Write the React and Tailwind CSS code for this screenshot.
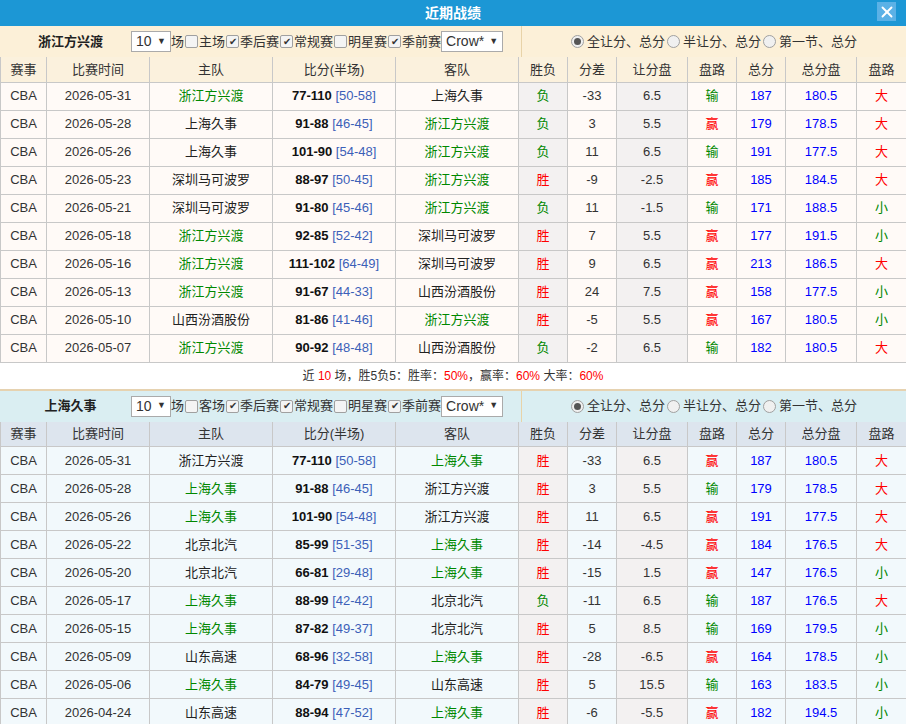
import { X } from "lucide-react";

const t1 = [
  ["2026-05-31", "浙江方兴渡", "77-110", "50-58", "上海久事", "负", "-33", "6.5", "输", "187", "180.5", "大"],
  ["2026-05-28", "上海久事", "91-88", "46-45", "浙江方兴渡", "负", "3", "5.5", "赢", "179", "178.5", "大"],
  ["2026-05-26", "上海久事", "101-90", "54-48", "浙江方兴渡", "负", "11", "6.5", "输", "191", "177.5", "大"],
  ["2026-05-23", "深圳马可波罗", "88-97", "50-45", "浙江方兴渡", "胜", "-9", "-2.5", "赢", "185", "184.5", "大"],
  ["2026-05-21", "深圳马可波罗", "91-80", "45-46", "浙江方兴渡", "负", "11", "-1.5", "输", "171", "188.5", "小"],
  ["2026-05-18", "浙江方兴渡", "92-85", "52-42", "深圳马可波罗", "胜", "7", "5.5", "赢", "177", "191.5", "小"],
  ["2026-05-16", "浙江方兴渡", "111-102", "64-49", "深圳马可波罗", "胜", "9", "6.5", "赢", "213", "186.5", "大"],
  ["2026-05-13", "浙江方兴渡", "91-67", "44-33", "山西汾酒股份", "胜", "24", "7.5", "赢", "158", "177.5", "小"],
  ["2026-05-10", "山西汾酒股份", "81-86", "41-46", "浙江方兴渡", "胜", "-5", "5.5", "赢", "167", "180.5", "小"],
  ["2026-05-07", "浙江方兴渡", "90-92", "48-48", "山西汾酒股份", "负", "-2", "6.5", "输", "182", "180.5", "大"],
];
const t2 = [
  ["2026-05-31", "浙江方兴渡", "77-110", "50-58", "上海久事", "胜", "-33", "6.5", "赢", "187", "180.5", "大"],
  ["2026-05-28", "上海久事", "91-88", "46-45", "浙江方兴渡", "胜", "3", "5.5", "输", "179", "178.5", "大"],
  ["2026-05-26", "上海久事", "101-90", "54-48", "浙江方兴渡", "胜", "11", "6.5", "赢", "191", "177.5", "大"],
  ["2026-05-22", "北京北汽", "85-99", "51-35", "上海久事", "胜", "-14", "-4.5", "赢", "184", "176.5", "大"],
  ["2026-05-20", "北京北汽", "66-81", "29-48", "上海久事", "胜", "-15", "1.5", "赢", "147", "176.5", "小"],
  ["2026-05-17", "上海久事", "88-99", "42-42", "北京北汽", "负", "-11", "6.5", "输", "187", "176.5", "大"],
  ["2026-05-15", "上海久事", "87-82", "49-37", "北京北汽", "胜", "5", "8.5", "输", "169", "179.5", "小"],
  ["2026-05-09", "山东高速", "68-96", "32-58", "上海久事", "胜", "-28", "-6.5", "赢", "164", "178.5", "小"],
  ["2026-05-06", "上海久事", "84-79", "49-45", "山东高速", "胜", "5", "15.5", "输", "163", "183.5", "小"],
  ["2026-04-24", "山东高速", "88-94", "47-52", "上海久事", "胜", "-6", "-5.5", "赢", "182", "194.5", "小"],
];

const widths = [46, 103, 123, 123, 123, 49, 49, 71, 49, 49, 71, 50];
const heads = ["赛事", "比赛时间", "主队", "比分(半场)", "客队", "胜负", "分差", "让分盘", "盘路", "总分", "总分盘", "盘路"];

function Box({ checked }) {
  return (
    <span className="inline-flex items-center justify-center w-[13px] h-[13px] border border-[#a0a0a0] rounded-[2px] bg-[#f4f4f4] text-[10px] leading-none mx-[1px]">
      {checked ? "✔" : ""}
    </span>
  );
}

function Radio({ on }) {
  return (
    <span className="inline-flex items-center justify-center w-[13px] h-[13px] rounded-full border border-[#a0a0a0] bg-[#f0f0f0] mr-[1px]">
      {on && <span className="w-[7px] h-[7px] rounded-full bg-[#555]" />}
    </span>
  );
}

function Filter({ team, venue, bg }) {
  return (
    <div className={`flex h-[31px] ${bg} text-[13px] text-[#333]`}>
      <div className="flex items-center w-[522px] border-r border-[#e8d3a8]">
        <div className="w-[131px] pl-[10px] text-center font-bold text-[#222]">{team}</div>
        <span className="inline-flex items-center justify-between w-[40px] h-[21px] border border-[#aaa] bg-white px-[4px] text-[14px]">10<span className="text-[9px]">▼</span></span>
        <span>场</span>
        <Box /><span>{venue}</span>
        <Box checked /><span>季后赛</span>
        <Box checked /><span>常规赛</span>
        <Box /><span>明星赛</span>
        <Box checked /><span>季前赛</span>
        <span className="inline-flex items-center justify-between w-[62px] h-[21px] border border-[#aaa] bg-white px-[4px] text-[14px]">Crow*<span className="text-[9px]">▼</span></span>
      </div>
      <div className="flex-1 flex items-center justify-center gap-[2px]">
        <Radio on /><span>全让分、总分</span>
        <Radio /><span>半让分、总分</span>
        <Radio /><span>第一节、总分</span>
      </div>
    </div>
  );
}

function Table({ rows, focus, headBg, rowBg }) {
  const wl = (v) => (v === "胜" ? "text-[#f00]" : "text-[#080]");
  return (
    <table className="w-full table-fixed border-collapse text-[13px] text-[#333]">
      <colgroup>
        {widths.map((w, i) => <col key={i} style={{ width: w }} />)}
      </colgroup>
      <thead>
        <tr className={`${headBg} h-[25px]`}>
          {heads.map((h, i) => (
            <th key={i} className="font-normal border border-[#c8c8c8] border-t-0">{h}</th>
          ))}
        </tr>
      </thead>
      <tbody>
        {rows.map((r, i) => (
          <tr key={i} className={`${rowBg} h-[28px] text-center`}>
            <td className="border border-[#c8c8c8]">CBA</td>
            <td className="border border-[#c8c8c8]">{r[0]}</td>
            <td className={`border border-[#c8c8c8] ${r[1] === focus ? "text-[#080]" : "text-[#222]"}`}>{r[1]}</td>
            <td className="border border-[#c8c8c8]">
              <b className="text-[#111]">{r[2]}</b> <span className="text-[#3c5fb8]">[{r[3]}]</span>
            </td>
            <td className={`border border-[#c8c8c8] ${r[4] === focus ? "text-[#080]" : "text-[#222]"}`}>{r[4]}</td>
            <td className={`border border-[#c8c8c8] bg-[#f3f1f1] ${wl(r[5])}`}>{r[5]}</td>
            <td className="border border-[#c8c8c8]">{r[6]}</td>
            <td className="border border-[#c8c8c8] bg-[#f3f1f1]">{r[7]}</td>
            <td className={`border border-[#c8c8c8] ${r[8] === "赢" ? "text-[#f00]" : "text-[#080]"}`}>{r[8]}</td>
            <td className="border border-[#c8c8c8] text-[#00f]">{r[9]}</td>
            <td className="border border-[#c8c8c8] text-[#00f]">{r[10]}</td>
            <td className={`border border-[#c8c8c8] ${r[11] === "大" ? "text-[#f00]" : "text-[#080]"}`}>{r[11]}</td>
          </tr>
        ))}
      </tbody>
    </table>
  );
}

export default function App() {
  return (
    <div className="w-[906px] h-[724px] overflow-hidden bg-white" style={{ fontFamily: '"Liberation Sans","Noto Sans CJK SC",sans-serif' }}>
      <div className="relative h-[26px] bg-[#1c97d5] flex items-center justify-center text-white font-bold text-[14px]">
        近期战绩
        <span className="absolute right-[10px] top-[2px] w-[19px] h-[19px] bg-[#5bb1e6] flex items-center justify-center">
          <X size={18} strokeWidth={2.5} />
        </span>
      </div>
      <Filter team="浙江方兴渡" venue="主场" bg="bg-[#fcf0d8]" />
      <Table rows={t1} focus="浙江方兴渡" headBg="bg-[#fbf1dd]" rowBg="bg-[#fffaf7]" />
      <div className="h-[28px] flex items-center justify-center text-[12px] text-[#333] border-b-2 border-[#e6d2b0]">
        近&nbsp;<span className="text-[#f00]">10</span>&nbsp;场，胜5负5：胜率：<span className="text-[#f00]">50%</span>，赢率：<span className="text-[#f00]">60%</span>&nbsp;大率：<span className="text-[#f00]">60%</span>
      </div>
      <Filter team="上海久事" venue="客场" bg="bg-[#daeef2]" />
      <Table rows={t2} focus="上海久事" headBg="bg-[#dde5ee]" rowBg="bg-[#f2f9fc]" />
    </div>
  );
}
